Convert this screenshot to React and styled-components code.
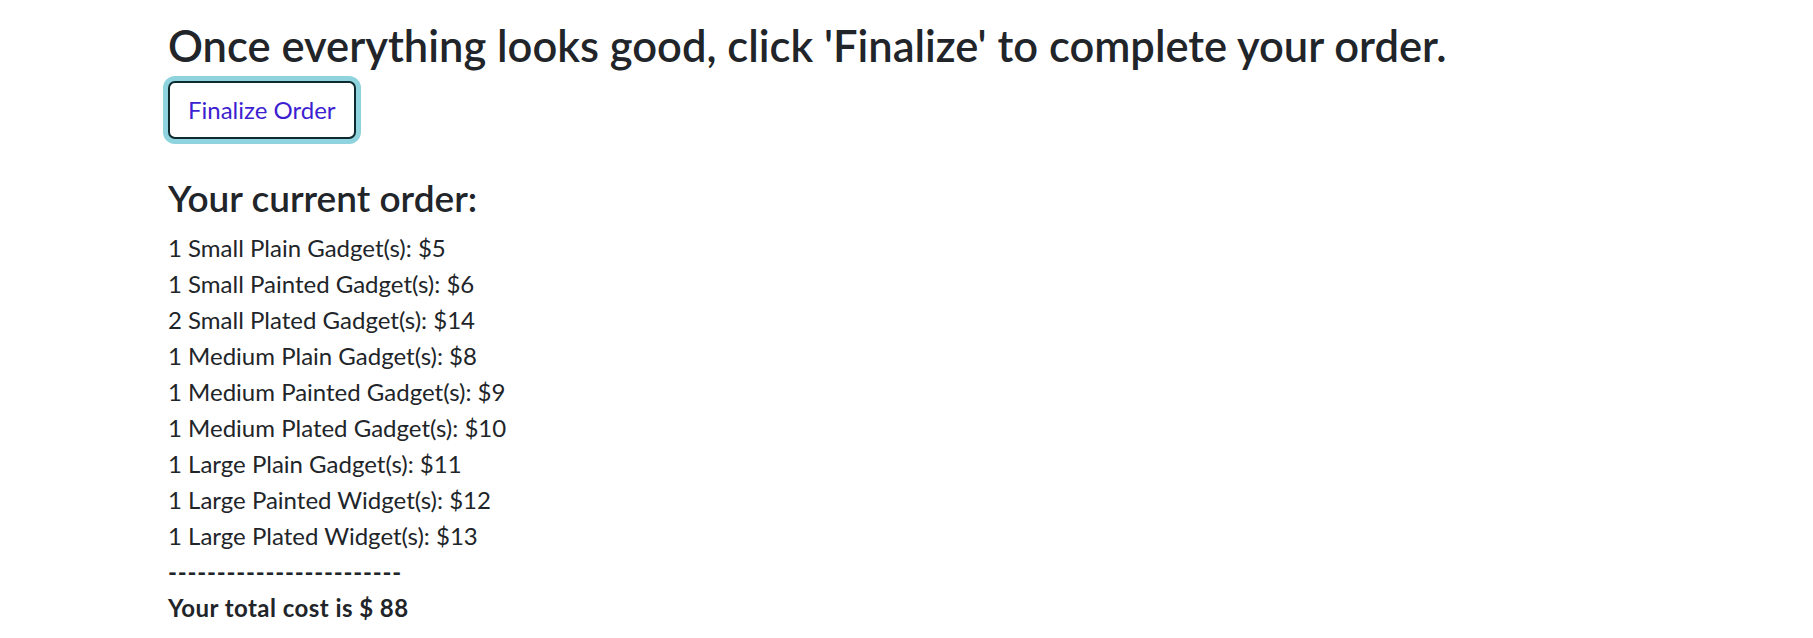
import styled, { createGlobalStyle } from "styled-components";

const GlobalStyle = createGlobalStyle`
  body {
    margin: 0;
    background: #fff;
    color: #212529;
    font-family: Lato, "Open Sans", sans-serif;
  }
`;

const items = [
  { qty: 1, name: "Small Plain Gadget", cost: 5 },
  { qty: 1, name: "Small Painted Gadget", cost: 6 },
  { qty: 2, name: "Small Plated Gadget", cost: 14 },
  { qty: 1, name: "Medium Plain Gadget", cost: 8 },
  { qty: 1, name: "Medium Painted Gadget", cost: 9 },
  { qty: 1, name: "Medium Plated Gadget", cost: 10 },
  { qty: 1, name: "Large Plain Gadget", cost: 11 },
  { qty: 1, name: "Large Painted Widget", cost: 12 },
  { qty: 1, name: "Large Plated Widget", cost: 13 },
];

const App = () => {
  const total = items.reduce((sum, item) => sum + item.cost, 0);
  return (
    <Page>
      <GlobalStyle />
      <Title>Once everything looks good, click 'Finalize' to complete your order.</Title>
      <FinalizeBtn>Finalize Order</FinalizeBtn>
      <Subtitle>Your current order:</Subtitle>
      <OrderList>
        {items.map((item) => (
          <OrderRow key={item.name}>
            {item.qty} {item.name}(s): ${item.cost}
          </OrderRow>
        ))}
      </OrderList>
      <Divider>------------------------</Divider>
      <Total>Your total cost is $ {total}</Total>
    </Page>
  );
};
export default App;

const Page = styled.div`
  padding: 19px 0 0 168px;
  font-size: 24px;
  line-height: 1.5;
`;
const Title = styled.h3`
  margin: 0 0 6px 0;
  font-size: 43.5px;
  font-weight: 600;
  line-height: 1.2;
`;
const FinalizeBtn = styled.button`
  display: block;
  font-family: inherit;
  font-size: 24px;
  line-height: 1.5;
  color: #3c1fd1;
  background: #fff;
  border: 2px solid #0e2a2e;
  border-radius: 7px;
  padding: 9px 18px;
  box-shadow: 0 0 0 5px #8ed3dd;
  margin: 10px 0 0 0;
`;
const Subtitle = styled.h4`
  margin: 37px 0 9px 0;
  font-size: 37px;
  font-weight: 600;
  line-height: 1.2;
`;
const OrderList = styled.div``;
const OrderRow = styled.div``;
const Divider = styled.div`
  font-weight: 700;
  letter-spacing: 0.8px;
`;
const Total = styled.div`
  font-weight: 700;
  letter-spacing: 0.45px;
`;
